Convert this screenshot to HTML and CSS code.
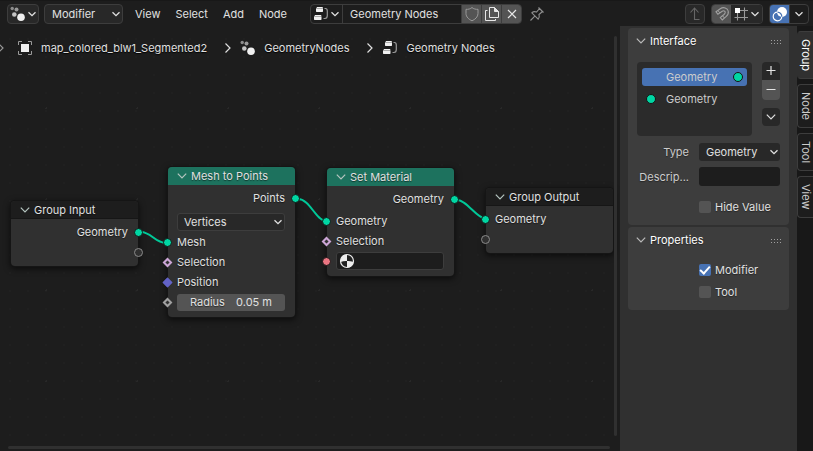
FILE: index.html
```html
<!DOCTYPE html>
<html lang="en">
<head>
<meta charset="utf-8">
<title>Geometry Nodes</title>
<link rel="stylesheet" href="styles.css">
</head>
<body>
<svg class="defs" aria-hidden="true">
  <symbol id="chev" viewBox="0 0 10 10"><path d="M1.5 3.2 5 6.7 8.5 3.2" fill="none" stroke="currentColor" stroke-width="1.3"/></symbol>
  <symbol id="fold" viewBox="0 0 10 10"><path d="M.8 2.7 5 7 9.2 2.7" fill="none" stroke="currentColor" stroke-width="1.2"/></symbol>
  <symbol id="sep" viewBox="0 0 8 12"><path d="M1.500 1.500 6 6 1.500 10.500" fill="none" stroke="currentColor" stroke-width="1.2"/></symbol>
  <symbol id="points" viewBox="0 0 16 16"><circle cx="2.200" cy="2.500" r="1.700" fill="#8c8c8c"/><circle cx="6.500" cy="3.500" r="2" fill="#999"/><circle cx="4.300" cy="8.500" r="2.300" fill="#c4c4c4"/><circle cx="11" cy="11.200" r="3.800" fill="#f0f0f0"/></symbol>
  <symbol id="tree" viewBox="0 0 16 16"><path d="M4 1H9.500L10 2H3.500ZM3 3H10V5.500L9.500 6H3.500L3 5.500ZM2 9H8L8.500 10H1.500ZM1 11H8.500V13.500L8 14H1.500L1 13.500Z" fill="#f0f0f0"/><path d="M3 2.500H10M1 10.500H8.500" stroke="#aaa"/><path d="M11.500 2.500H12.500C14 2.500 14.300 3.500 14.300 5V9.500C14.300 11.500 13.500 12.500 12 12.500H10.500" fill="none" stroke="#999" stroke-width="1.200"/></symbol>
  <symbol id="grip" viewBox="0 0 12 5"><path d="M0 1.500h1M3 1.500h1M6 1.500h1M9 1.500h1M0 4.500h1M3 4.500h1M6 4.500h1M9 4.500h1" stroke="#a0a0a0" stroke-width="1"/></symbol>
</svg>

<header class="bar">
  <button class="box pair" aria-label="Editor type"><svg class="i16"><use href="#points"/></svg><svg class="i8"><use href="#chev"/></svg></button>
  <div class="pick mode">
    <select aria-label="Node tree type"><option>Modifier</option></select>
    <svg class="i8"><use href="#chev"/></svg>
  </div>
  <nav class="menus">
    <button>View</button><button>Select</button><button>Add</button><button>Node</button>
  </nav>
  <div class="group block">
    <button class="pair" aria-label="Browse node tree"><svg class="i16"><use href="#tree"/></svg><svg class="i8"><use href="#chev"/></svg></button>
    <input type="text" aria-label="Name" value="Geometry Nodes">
    <button class="sq lit" aria-label="Fake user"><svg class="i16" viewBox="0 0 16 16"><path d="M8 1.500C6.500 3 4 3.500 2 3.300V7.500C2 11 5 13.500 8 14.800 11 13.500 14 11 14 7.500V3.300C12 3.500 9.500 3 8 1.500Z" fill="none" stroke="#999"/></svg></button>
    <button class="sq lit" aria-label="New node tree"><svg class="i16" viewBox="0 0 16 16"><path d="M5.500 1.500H10.500L14.500 5.500V11.500H5.500ZM10.500 1.500V5.500H14.500M3.500 4.500H1.500V14.500H11.500V13" fill="none" stroke="#e6e6e6"/><path d="M10.500 1.500V5.500H14.500Z" fill="#e6e6e6"/></svg></button>
    <button class="sq lit" aria-label="Unlink"><svg class="i16" viewBox="0 0 16 16"><path d="M4 4 12 12M12 4 4 12" stroke="#e6e6e6" stroke-width="1.200"/></svg></button>
  </div>
  <button class="bare" aria-label="Pin"><svg class="i16" viewBox="0 0 16 16"><path d="M9.500 1.500 14.500 6.500M10.500 2.500 7.500 6C6 5.500 4 5.700 2.800 6.800L9.200 13.200C10.300 12 10.500 10 10 8.500L13.500 5.500M5.800 10.200 1.500 14.500" fill="none" stroke="#8f8f8f" stroke-width="1.100"/></svg></button>
  <div class="tools">
    <button class="box dim" aria-label="Parent node tree"><svg class="i16" viewBox="0 0 16 16"><path d="M3.500 6.500 7.500 2 11.500 6.500M7.500 2V13.500H12.500" fill="none" stroke="#666" stroke-width="1.100"/></svg></button>
    <div class="group">
      <button class="sq lit" aria-label="Snap"><svg class="i16" viewBox="0 0 16 16"><path d="M2 5.800 6.300 2.700C9.500.500 13.500 2 14.200 5 14.800 7.500 13.700 9.300 12 10.700L8.300 14 6.300 11.600 10 8.500C11.500 7 11.500 6 10.700 5.200 9.900 4.600 9 4.700 8.200 5.200L3.900 8.300Z" fill="none" stroke="#a0a0a0" stroke-width="1.100"/><path d="M4 4.500 5.800 7M8.500 9.800 10.500 12" stroke="#a0a0a0"/></svg></button>
      <button class="pair" aria-label="Snap target"><svg class="i16" viewBox="0 0 16 16"><path d="M4.500 6V14.500M11.500 1.500V14.500M1.500 11.500H15M7 4.500H15" stroke="#999" stroke-width="1.100"/><rect x="2" y="2" width="5" height="5" fill="#fff"/></svg><svg class="i8"><use href="#chev"/></svg></button>
    </div>
    <div class="group">
      <button class="sq blue" aria-label="Overlays"><svg class="i16" viewBox="0 0 16 16"><circle cx="10" cy="6" r="5" fill="#fff"/><circle cx="5.500" cy="10.500" r="4.300" fill="none" stroke="#fff" stroke-width="1.200"/><path d="M5.500 6.200A4.300 4.300 0 0 1 9.800 10.700" fill="none" stroke="#4772b3" stroke-width="1.200"/></svg></button>
      <button class="sq" aria-label="Overlay options"><svg class="i8"><use href="#chev"/></svg></button>
    </div>
  </div>
</header>

<main class="work">
  <section class="canvas">
    <nav class="crumbs" aria-label="Context path">
      <svg class="arrow lead"><use href="#sep"/></svg>
      <svg class="i16" viewBox="0 0 16 16"><rect x="4" y="4" width="8" height="8" fill="#f0f0f0"/><path d="M1.500 5V1.500H5M11 1.500H14.500V5M14.500 11V14.500H11M5 14.500H1.500V11" fill="none" stroke="#999"/></svg>
      <span>map_colored_blw1_Segmented2</span>
      <svg class="arrow"><use href="#sep"/></svg>
      <svg class="i16"><use href="#points"/></svg>
      <span>GeometryNodes</span>
      <svg class="arrow"><use href="#sep"/></svg>
      <svg class="i16"><use href="#tree"/></svg>
      <span>Geometry Nodes</span>
    </nav>

    <article class="node dark n-in">
      <h2><svg class="i10"><use href="#fold"/></svg>Group Input</h2>
      <div class="row out first">Geometry<i class="sock geo"></i></div>
      <div class="row out"><i class="sock ghost"></i></div>
    </article>

    <article class="node n-points">
      <h2><svg class="i10"><use href="#fold"/></svg>Mesh to Points</h2>
      <div class="row out first">Points<i class="sock geo"></i></div>
      <div class="row tall"><div class="pick vert">
        <select aria-label="Mode"><option>Vertices</option></select>
        <svg class="i8"><use href="#chev"/></svg>
      </div></div>
      <div class="row"><i class="sock geo"></i>Mesh</div>
      <div class="row"><i class="sock dia pink"></i>Selection</div>
      <div class="row"><i class="sock dia vec"></i>Position</div>
      <div class="row"><i class="sock dia num"></i><label class="slider"><span>Radius</span><input type="text" value="0.05 m"></label></div>
    </article>

    <article class="node n-mat">
      <h2><svg class="i10"><use href="#fold"/></svg>Set Material</h2>
      <div class="row out first">Geometry<i class="sock geo"></i></div>
      <div class="row"><i class="sock geo"></i>Geometry</div>
      <div class="row"><i class="sock dia pink"></i>Selection</div>
      <div class="row"><i class="sock mat"></i><div class="field">
        <svg class="i16" viewBox="0 0 16 16"><circle cx="8" cy="8" r="6.500" fill="#222" stroke="#eee" stroke-width="1.200"/><path d="M8 8V1.500A6.500 6.500 0 0 0 1.600 9C3.500 8.200 6 7.800 8 8ZM8 8C10 8 12.500 8.300 14.400 9A6.500 6.500 0 0 1 8 14.500Z" fill="#eee"/></svg>
        <input type="text" aria-label="Material">
      </div></div>
    </article>

    <article class="node dark n-out">
      <h2><svg class="i10"><use href="#fold"/></svg>Group Output</h2>
      <div class="row first"><i class="sock geo"></i>Geometry</div>
      <div class="row"><i class="sock ghost"></i></div>
    </article>

    <svg class="links" aria-hidden="true">
      <path d="M141 206C151 206 155 217 166 217M298 173C310 173 316 195 326 195M457 174C467 174 476 192 486 193"/>
    </svg>
    <div class="scroll-y"></div>
    <div class="scroll-x"></div>
  </section>

  <aside class="side">
    <section class="panel">
      <h3><svg class="i10"><use href="#fold"/></svg>Interface<svg class="grip"><use href="#grip"/></svg></h3>
      <div class="listing">
        <div class="list">
          <button class="item on"><span>Geometry</span><i class="dot"></i></button>
          <button class="item"><i class="dot"></i><span>Geometry</span></button>
        </div>
        <div class="ops">
          <button aria-label="Add"><svg class="i12" viewBox="0 0 12 12"><path d="M6 1V10M1.500 5.500H10.500" stroke="#e6e6e6" stroke-width="1.200"/></svg></button>
          <button class="lit" aria-label="Remove"><svg class="i12" viewBox="0 0 12 12"><path d="M1.500 5.500H10.500" stroke="#e6e6e6"/></svg></button>
          <button class="more" aria-label="Specials"><svg class="i10"><use href="#fold"/></svg></button>
        </div>
      </div>
      <div class="props">
        <label for="type">Type</label>
        <div class="pick">
          <select id="type"><option>Geometry</option></select>
          <svg class="i8"><use href="#chev"/></svg>
        </div>
        <label for="desc">Descrip...</label>
        <input class="text" id="desc" type="text">
      </div>
      <label class="check gap"><input type="checkbox">Hide Value</label>
    </section>
    <section class="panel">
      <h3><svg class="i10"><use href="#fold"/></svg>Properties<svg class="grip"><use href="#grip"/></svg></h3>
      <label class="check gap"><input type="checkbox" checked>Modifier</label>
      <label class="check"><input type="checkbox">Tool</label>
    </section>
  </aside>

  <nav class="tabs">
    <button class="on">Group</button><button>Node</button><button>Tool</button><button>View</button>
  </nav>
</main>
</body>
</html>
```
FILE: styles.css
```css
* { box-sizing: border-box; }

body {
  margin: 0;
  height: 100vh;
  display: flex;
  flex-direction: column;
  overflow: hidden;
  background: #1d1d1d;
  color: #e0e0e0;
  font: 11px/16px Inter, sans-serif;
}

button, input, select {
  margin: 0;
  padding: 0;
  border: 0;
  background: none;
  color: inherit;
  font: inherit;
  appearance: none;
  outline: none;
  min-width: 0;
}

svg { display: block; flex: none; }
.defs { position: absolute; width: 0; height: 0; }
.i8, .i10 { width: 10px; height: 10px; }
.i12 { width: 12px; height: 12px; }
.i16 { width: 16px; height: 16px; }
.lit { background: #545454; }
.blue { background: #4772b3; }

/* Header */
.bar {
  flex: none;
  display: flex;
  align-items: center;
  height: 26px;
  padding: 1px 4px 0 7px;
  border-top: 1px solid #181818;
}
.bar button { display: flex; align-items: center; justify-content: center; }
.box, .group, .mode {
  height: 20px;
  border: 1px solid #3d3d3d;
  border-radius: 4px;
  background: #282828;
}
.group { display: flex; overflow: hidden; background: #1d1d1d; }
.pair { width: 32px; gap: 1px; }
.sq { width: 20px; border-left: 1px solid #3d3d3d; }
.sq:first-child { border-left: 0; }
.mode { width: 79px; margin-left: 5px; }
.dim { width: 20px; }
.menus { display: flex; gap: 15px; margin-left: 12px; }
.block { width: 212px; margin-left: 23px; }
.block .pair { width: 31px; }
.block input { flex: 1; padding-left: 7px; border-left: 1px solid #3d3d3d; }
.bare { margin-left: 7px; }
.tools { display: flex; gap: 6px; margin-left: auto; }
.tools .sq { width: 19px; }
.tools .pair { width: 31px; background: #282828; }

.pick { display: grid; align-items: center; }
.pick > * { grid-area: 1 / 1; }
.pick select { width: 100%; height: 18px; padding-left: 7px; }
.pick svg { justify-self: end; margin-right: 1px; pointer-events: none; }

/* Node canvas */
.work { flex: 1; display: flex; min-height: 0; }
.canvas {
  flex: 1;
  position: relative;
  overflow: hidden;
  background:
    radial-gradient(circle, #282828 1px, transparent 1px) 1px 37px / 91px 91px,
    radial-gradient(circle, #202020 1px, transparent 1px) 1px 4px / 18px 18px,
    #1d1d1d;
}
.crumbs { display: flex; align-items: center; height: 44px; text-shadow: 0 1px 1px #000; }
.crumbs span { margin: 0 17px 0 8px; }
.arrow { width: 8px; height: 12px; margin-right: 8px; }
.lead { margin: 0 12px 0 -3px; color: #999; }

.node {
  position: absolute;
  width: 127px;
  border-radius: 4px;
  background: #303030;
  box-shadow: 0 0 0 1px #151515, 0 2px 6px 1px #0009;
  text-shadow: 0 1px 1px #0008;
}
.n-in { left: 11px; top: 175px; height: 65px; }
.n-points { left: 168px; top: 141px; height: 150px; }
.n-mat { left: 327px; top: 142px; height: 108px; }
.n-out { left: 486px; top: 162px; height: 65px; }
.node h2 {
  display: flex;
  align-items: center;
  gap: 4px;
  height: 18px;
  margin: 0;
  padding-left: 9px;
  border-radius: 4px 4px 0 0;
  background: #1d725e;
  font: inherit;
}
.node h2 svg { color: #b5c5c0; }
.dark h2 { background: #1d1d1d; border-bottom: 1px solid #161616; }
.row {
  position: relative;
  display: flex;
  align-items: center;
  height: 20px;
  padding: 0 10px 0 9px;
}
.first { margin-top: 3px; }
.out { justify-content: flex-end; }
.row.tall { height: 24px; padding-top: 4px; }
.n-mat .first { margin-bottom: 2px; }
.sock {
  position: absolute;
  left: -5px;
  width: 9px;
  height: 9px;
  border: 1px solid #151515;
  border-radius: 50%;
  z-index: 1;
}
.out .sock { left: auto; right: -5px; }
.geo { background: #00d6a3; }
.mat { background: #eb7582; }
.ghost { border: 1px solid #8a8a8a; background: #303030; }
.dia { left: -4px; width: 7px; height: 7px; border-radius: 0; transform: rotate(45deg); }
.pink { background: #303030; border: 2px solid #cca6d6; }
.vec { background: #6363c7; border-color: #6363c7; }
.num { background: #303030; border: 2px solid #a1a1a1; }
.vert, .field {
  width: 100%;
  height: 18px;
  border: 1px solid #3d3d3d;
  border-radius: 3px;
  background: #282828;
}
.vert select { height: 16px; padding-left: 6px; }
.field { display: flex; align-items: center; padding-left: 2px; background: #1d1d1d; }
.field input { flex: 1; }
.slider {
  display: flex;
  width: 100%;
  height: 17px;
  padding: 0 13px;
  border-radius: 3px;
  background: #545454;
  align-items: center;
  justify-content: space-between;
}
.slider input { width: 40px; text-align: right; }
.links { position: absolute; inset: 0; width: 100%; height: 100%; fill: none; stroke: #00c898; stroke-width: 2; pointer-events: none; }
.scroll-y, .scroll-x { position: absolute; border-radius: 2px; background: #303030; }
.scroll-y { top: 10px; right: 3px; bottom: 15px; width: 3px; }
.scroll-x { left: 8px; right: 10px; bottom: 2px; height: 3px; }

/* Sidebar */
.side { width: 177px; padding: 2px 8px; background: #303030; }
.panel {
  margin-bottom: 2px;
  padding: 0 9px 7px;
  border-radius: 4px;
  background: #3d3d3d;
  text-shadow: 0 1px 1px #0006;
}
.panel h3 {
  display: flex;
  align-items: center;
  gap: 4px;
  height: 26px;
  margin: 0 -3px 0 -1px;
  font: inherit;
  color: #fff;
}
.panel h3 .i10 { color: #bbb; }
.grip { width: 12px; height: 5px; margin-left: auto; }
.listing { display: flex; gap: 10px; margin-top: 8px; }
.list { flex: 1; height: 74px; padding: 6px 5px; border-radius: 4px; background: #2b2b2b; }
.item {
  display: flex;
  align-items: center;
  width: 100%;
  height: 18px;
  margin-bottom: 4px;
  padding: 0 4px;
  border-radius: 3px;
  color: #ccc;
}
.item.on { background: #4772b3; padding-left: 24px; justify-content: space-between; }
.item .dot + span { margin-left: 10px; }
.dot { width: 10px; height: 10px; border: 1px solid #151515; border-radius: 50%; background: #00d6a3; }
.ops { width: 18px; }
.ops button { display: grid; place-items: center; width: 18px; height: 18px; background: #282828; border-radius: 4px 4px 0 0; }
.ops .lit { height: 20px; background: #545454; border-radius: 0 0 4px 4px; }
.ops .more { margin-top: 8px; border-radius: 4px; }
.props {
  display: grid;
  grid-template-columns: 52px 1fr;
  grid-auto-rows: 19px;
  gap: 6px 10px;
  align-items: center;
  margin-top: 6px;
}
.props label { text-align: right; color: #ccc; }
.props .pick { border-radius: 3px; background: #282828; }
.props .text { height: 19px; padding: 0 6px; border-radius: 3px; background: #1d1d1d; }
.check { display: flex; align-items: center; gap: 4px; height: 22px; padding-left: 62px; }
.check.gap { margin-top: 10px; }
.panel + .panel .check.gap { margin-top: 6px; }
.check input { width: 12px; height: 12px; border-radius: 2px; background: #545454; display: grid; place-items: center; }
.check input:checked { background: #4772b3; }
.check input:checked::before {
  content: "";
  width: 8px;
  height: 4px;
  border: solid #fff;
  border-width: 0 0 2px 2px;
  transform: translateY(-1px) rotate(-48deg);
}

/* Vertical tabs */
.tabs { display: flex; flex-direction: column; gap: 5px; width: 16px; padding-top: 5px; background: #181818; }
.tabs button {
  writing-mode: vertical-rl;
  padding: 7px 0;
  border: 1px solid #3d3d3d;
  border-width: 1px 0 1px 1px;
  border-radius: 4px 0 0 4px;
  background: #1d1d1d;
  color: #ccc;
  line-height: 14px;
}
.tabs .on { background: #303030; border-left-color: #303030; color: #fff; }
```
